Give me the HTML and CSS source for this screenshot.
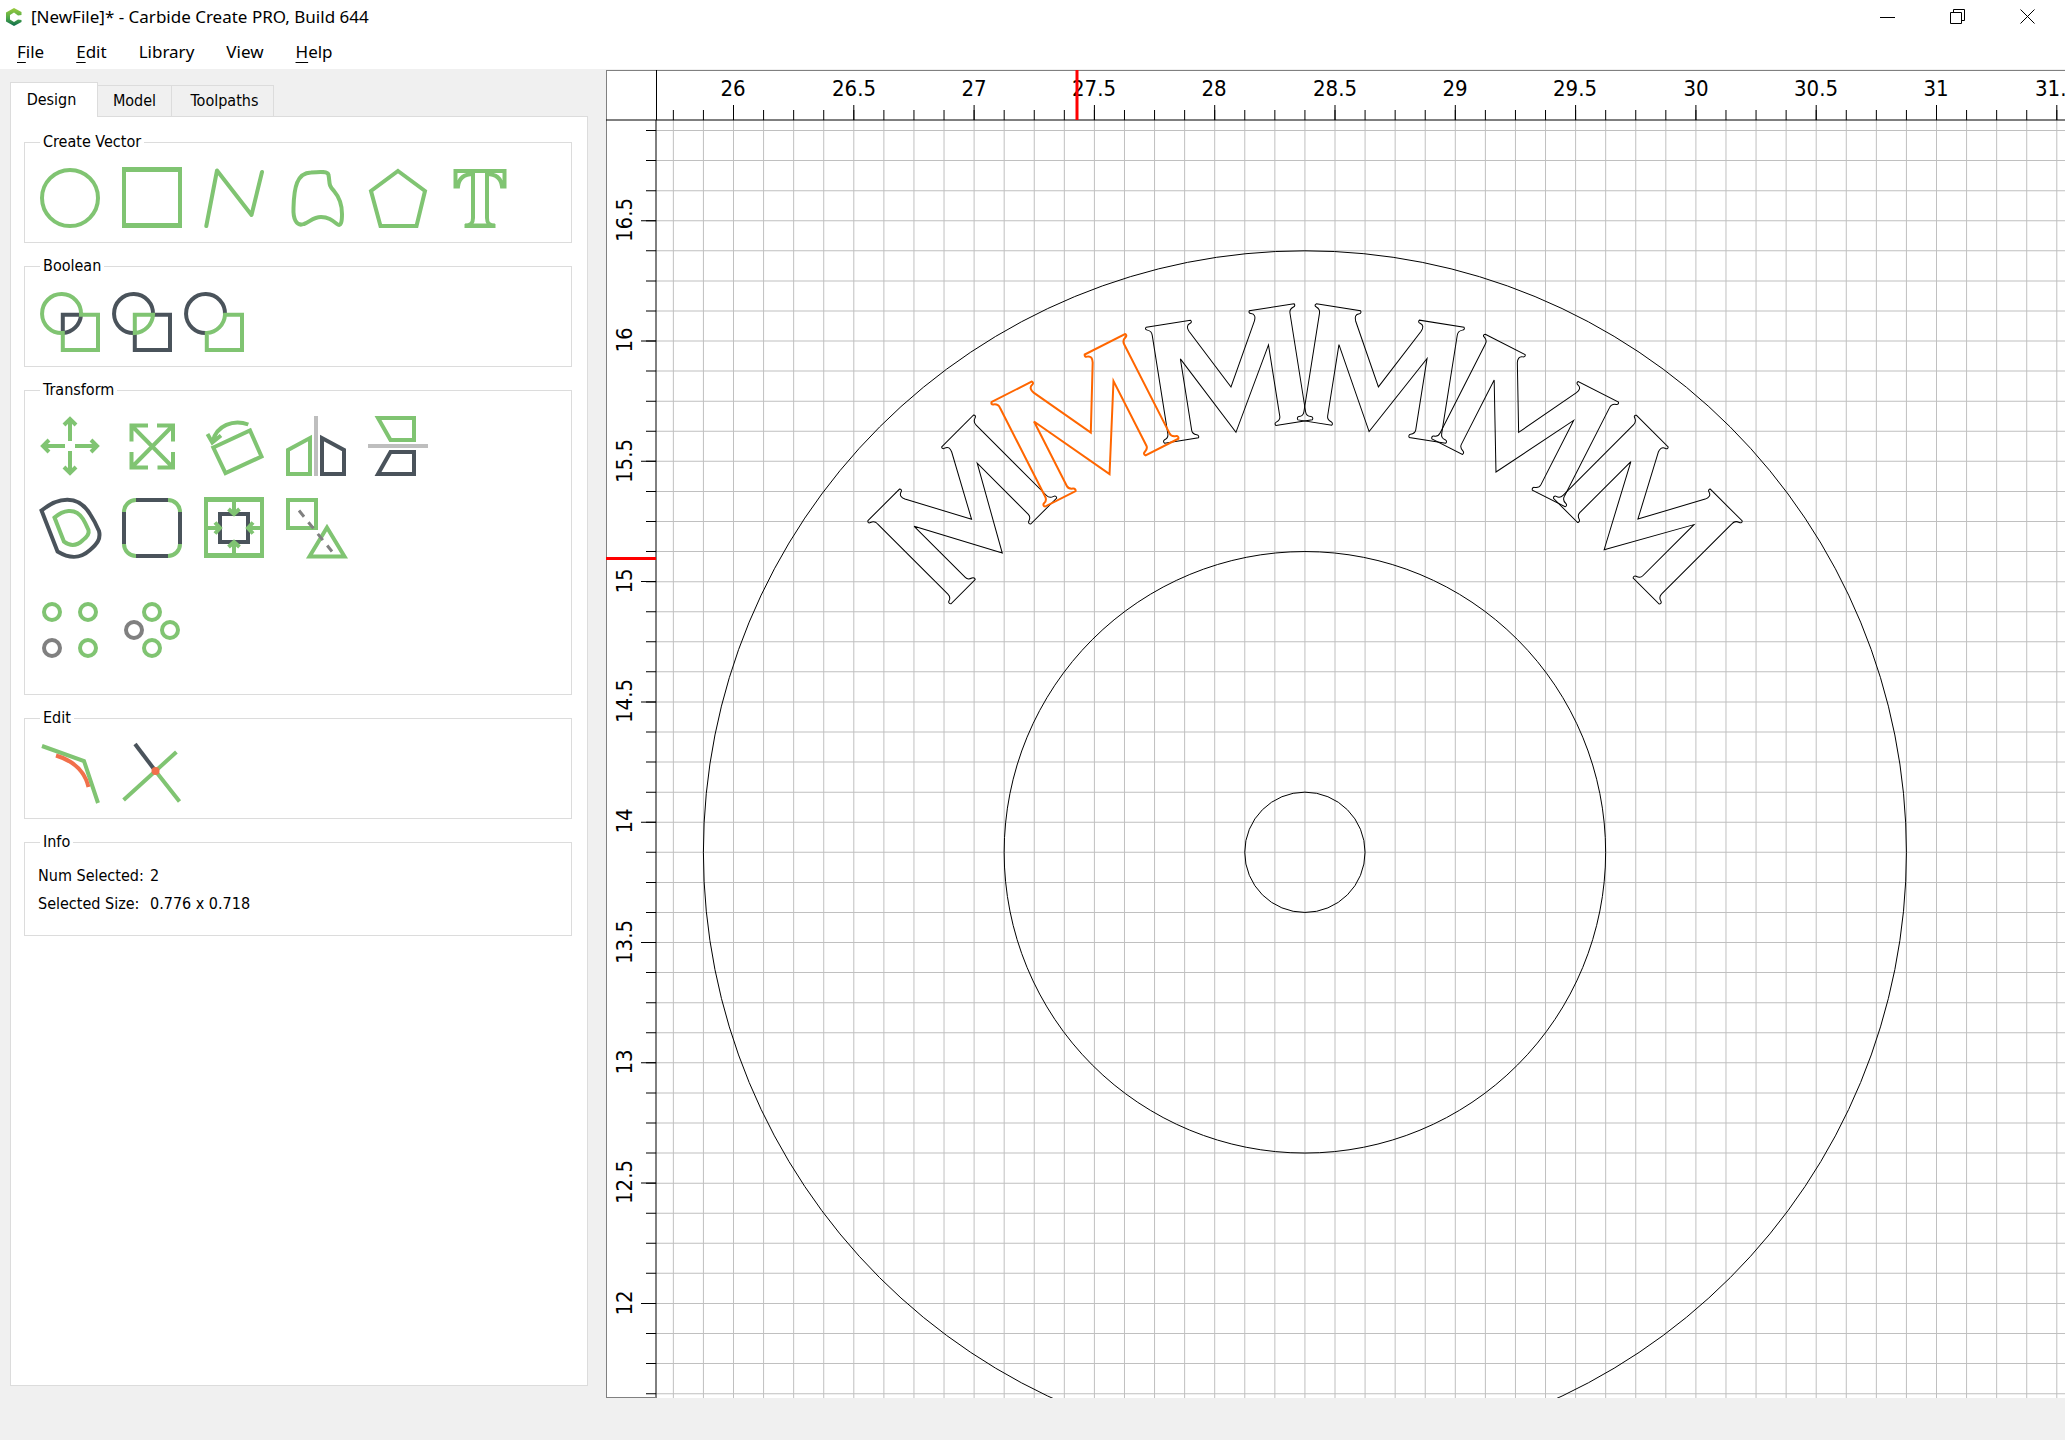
FILE: index.html
```html
<!DOCTYPE html>
<html lang="en">
<head>
<meta charset="utf-8">
<title>[NewFile]* - Carbide Create PRO, Build 644</title>
<link rel="stylesheet" href="styles.css">
</head>
<body>
<header class="titlebar">
  <svg class="logo" width="20" height="20" viewBox="0 0 20 20" aria-hidden="true">
    <defs><linearGradient id="logo-fill" x1="0" y1="0" x2="0" y2="1"><stop offset="0" stop-color="#9ccb3c"/><stop offset=".55" stop-color="#4fa84a"/><stop offset="1" stop-color="#0b6a4c"/></linearGradient></defs>
    <path fill="url(#logo-fill)" d="M10 1L17.500 5V8L14 8.500L10 5.500L6 8V12.500L10 15L14 12.500L17.500 13V15L10 19L2 14.500V5.500Z"/>
  </svg>
  <h1 class="title">[NewFile]* - Carbide Create PRO, Build 644</h1>
  <div class="window-controls">
    <button class="window-button" aria-label="Minimize"><svg width="16" height="16"><path d="M0 8.500H15"/></svg></button>
    <button class="window-button" aria-label="Restore"><svg width="16" height="16"><path d="M.5 3.500H11.500V14.500H.5ZM3.500 3.500V.5H14.500V11.500H11.500"/></svg></button>
    <button class="window-button" aria-label="Close"><svg width="16" height="16"><path d="M.5 .5L14.500 14.500M14.500 .5L.5 14.500"/></svg></button>
  </div>
</header>
<nav class="menubar">
  <button class="menu"><u>F</u>ile</button>
  <button class="menu"><u>E</u>dit</button>
  <button class="menu">Library</button>
  <button class="menu">View</button>
  <button class="menu"><u>H</u>elp</button>
</nav>
<main class="workspace">
  <aside class="sidebar">
    <div class="tabs" role="tablist">
      <button class="tab tab-active" role="tab" aria-selected="true">Design</button>
      <button class="tab" role="tab">Model</button>
      <button class="tab tab-wide" role="tab">Toolpaths</button>
    </div>
    <div class="pane">
      <fieldset class="group">
        <legend>Create Vector</legend>
        <div class="tools">
          <button class="tool" aria-label="Circle"><svg viewBox="0 0 60 60"><circle class="g" cx="30" cy="30" r="28"/></svg></button>
          <button class="tool" aria-label="Rectangle"><svg viewBox="0 0 60 60"><path class="gf" d="M0-1H60V60H0ZM4 4V55H56V4Z"/></svg></button>
          <button class="tool" aria-label="Polyline"><svg viewBox="0 0 60 60"><path class="g round" d="M2.300 58L13 2.500L47.500 47L58 4"/></svg></button>
          <button class="tool" aria-label="Curve"><svg viewBox="0 0 60 60"><path class="g" d="M7.500 40C8 19 11 5 25 4.500C35 3.500 42 3.500 42.500 7C44 14 42 17 48 23C54 30 56 38 56 46C56 54 55 59 51 56C46 52 42 49 35 49C27 49 24 54 18 56C10 59 7 50 7.500 40Z"/></svg></button>
          <button class="tool" aria-label="Polygon"><svg viewBox="0 0 60 60"><path class="g" d="M30 3L57 23L48.500 58H12.500L3 23Z"/></svg></button>
          <button class="tool" aria-label="Text"><svg viewBox="0 0 60 60"><path class="g" d="M5.500 18.500V3H54.500V18.500H52C51 10 46 6 37 6V50C37 55 39 57.500 45 57.500H15C21 57.500 23 55 23 50V6C14 6 9 10 8 18.500Z"/><path class="g" d="M14.500 58H45.500"/></svg></button>
        </div>
      </fieldset>
      <fieldset class="group">
        <legend>Boolean</legend>
        <div class="tools tools-tight">
          <button class="tool" aria-label="Union"><svg viewBox="0 0 60 60"><path class="d" d="M22.800 41V22.800H41A19.500 19.500 0 0 1 22.800 41"/><path class="g" d="M41 22.800A19.500 19.500 0 1 0 22.800 41V58H58V22.800Z"/></svg></button>
          <button class="tool" aria-label="Intersection"><svg viewBox="0 0 60 60"><path class="d" d="M41 22.800A19.500 19.500 0 1 0 22.800 41V58H58V22.800Z"/><path class="g" d="M22.800 41V22.800H41A19.500 19.500 0 0 1 22.800 41Z"/></svg></button>
          <button class="tool" aria-label="Subtract"><svg viewBox="0 0 60 60"><path class="d" d="M41 22.800A19.500 19.500 0 1 0 22.800 41"/><path class="g" d="M22.800 41V58H58V22.800H41A19.500 19.500 0 0 1 22.800 41Z"/></svg></button>
        </div>
      </fieldset>
      <fieldset class="group group-tall">
        <legend>Transform</legend>
        <div class="tools">
          <button class="tool" aria-label="Move"><svg viewBox="0 0 60 60"><path class="g" d="M30 3V25M24 9L30 3L36 9M30 57V35M24 51L30 57L36 51M3 30H25M9 24L3 30L9 36M57 30H35M51 24L57 30L51 36"/></svg></button>
          <button class="tool" aria-label="Scale"><svg viewBox="0 0 60 60"><path class="g" d="M26 9.500H9.500V25.500M35 9.500H51V25.500M9.500 36V51.500H26M35.500 51.500H51V36M9.500 9.500L51 51.500M51 9.500L9.500 51.500"/></svg></button>
          <button class="tool" aria-label="Rotate"><svg viewBox="0 0 60 60"><path class="g" d="M9.300 31.500L46 14.500L57.500 40.500L21.500 57ZM44.300 8.500C30 3 12 9 8.500 26M3.500 18L8.300 26.500L17 19.500"/></svg></button>
          <button class="tool" aria-label="Mirror horizontally"><svg viewBox="0 0 60 60"><path class="l" d="M30 0V60"/><path class="g" d="M2 34V58H24V22Z"/><path class="d" d="M58 34V58H36V22Z"/></svg></button>
          <button class="tool" aria-label="Mirror vertically"><svg viewBox="0 0 60 60"><path class="l" d="M0 30H60"/><path class="g" d="M10 2H46V24H22.500Z"/><path class="d" d="M10 58H46V36H22.500Z"/></svg></button>
        </div>
        <div class="tools">
          <button class="tool" aria-label="Offset"><svg viewBox="0 0 60 60"><path class="d" d="M1.500 12.500C18-1 38-4 50 16C54 22 56 26 59 33C61 41 57 46 50 52C40 61 30 61 17.500 53.500Z"/><path class="g" d="M14.500 19.500C22 13 35 8 43 21C46 26 47 29 48.500 32C49.500 36 47 39 43 42C37 48 31 49 24 43.700Z"/></svg></button>
          <button class="tool" aria-label="Fillet"><svg viewBox="0 0 60 60"><rect class="g" x="2" y="2" width="56" height="56" rx="12"/><path class="d" d="M14 2H46M14 58H46M2 14V46M58 14V46"/></svg></button>
          <button class="tool" aria-label="Fit"><svg viewBox="0 0 60 60"><path class="gf" d="M0-1H60V60H0ZM4 4V55H56V4Z"/><rect class="d" x="16" y="16" width="28" height="28"/><path class="g" d="M30 3V16M24.500 11L30 16L35.500 11M30 57V44M24.500 49L30 44L35.500 49M3 30H16M11 24.500L16 30L11 35.500M57 30H44M49 24.500L44 30L49 35.500"/></svg></button>
          <button class="tool" aria-label="Align"><svg viewBox="0 0 60 60"><path class="g" d="M2 2H30V30H2ZM41 29.500L23.500 58.500H58.500Z"/><path class="dash" d="M13 12.500L46 53.500"/></svg></button>
        </div>
        <div class="tools tools-array">
          <button class="tool" aria-label="Linear array"><svg viewBox="0 0 60 60"><circle class="g" cx="12" cy="12" r="8"/><circle class="g" cx="48" cy="12" r="8"/><circle class="n" cx="12" cy="48" r="8"/><circle class="g" cx="48" cy="48" r="8"/></svg></button>
          <button class="tool" aria-label="Circular array"><svg viewBox="0 0 60 60"><circle class="g" cx="30" cy="12" r="8"/><circle class="n" cx="12" cy="30" r="8"/><circle class="g" cx="48" cy="30" r="8"/><circle class="g" cx="30" cy="48" r="8"/></svg></button>
        </div>
      </fieldset>
      <fieldset class="group">
        <legend>Edit</legend>
        <div class="tools">
          <button class="tool" aria-label="Node edit"><svg viewBox="0 0 60 60"><path class="g" d="M2 2L44 17L58 59"/><path class="o" d="M16 11.500C34 17 45 28 48.500 43"/></svg></button>
          <button class="tool" aria-label="Trim"><svg viewBox="0 0 60 60"><path class="g" d="M1.600 56L54.400 8M33.500 27L57.500 57.500"/><path class="d" d="M13 0L33.500 27"/><circle class="of" cx="33.500" cy="27" r="4"/></svg></button>
        </div>
      </fieldset>
      <fieldset class="group group-info">
        <legend>Info</legend>
        <dl class="info">
          <dt>Num Selected:</dt><dd>2</dd>
          <dt>Selected Size:</dt><dd>0.776 x 0.718</dd>
        </dl>
      </fieldset>
    </div>
  </aside>
  <section class="viewport" aria-label="Drawing">
    <svg class="drawing" width="100%" height="100%">
      <defs>
        <path id="letter" d="M-74.500-543.500H-29.800C-28.800-542.500-28.800-541-30.500-540.500C-34.500-539.500-34.500-536-33-532.700L-.2-471.200L33.300-532.800C35-536.500 34.800-539.500 31-540.500C29-541 29-542.500 29.800-543.500H75C76-542.500 75.800-541 74-540.400C70.500-539.300 69.500-537.500 69.600-534.500V-435C69.500-432 71-430.200 74-429.400C76-428.800 76-427 75-426H38.200C37.200-427 37.200-428.800 39-429.400C42-430.400 43.400-431.800 43.400-434.500V-506.800L-2.400-425.600L-45.800-506.800V-434.500C-45.800-431.800-44.500-430.400-41.500-429.400C-39.700-428.800-39.500-427-40.300-426H-74.500C-75.700-427-75.700-428.800-74-429.400C-71-430.200-69.900-432-69.900-435V-534.500C-69.800-537.500-71-539.300-74-540.400C-76-541-76-542.500-74.500-543.500Z"/>
      </defs>
      <!-- grid and vectors, clipped to the area inside the rulers -->
      <svg x="50" y="50" width="100%" height="100%">
        <g transform="translate(-50 -50)">
          <path class="grid" stroke-width="4000" stroke-dasharray="1 29.075" d="M66.850 1000H5000"/>
          <path class="grid" stroke-width="8000" stroke-dasharray="1 29.075" d="M1000 60V4000"/>
          <g class="shape" transform="translate(698.900 782.300)">
            <circle r="601.500"/>
            <circle r="300.750"/>
            <circle r="60.150"/>
            <use href="#letter" transform="rotate(-45)"/>
            <use href="#letter" transform="rotate(-9)"/>
            <use href="#letter" transform="rotate(9)"/>
            <use href="#letter" transform="rotate(27)"/>
            <use href="#letter" transform="rotate(45)"/>
            <use class="selected" href="#letter" transform="rotate(-27)"/>
          </g>
        </g>
      </svg>
      <!-- rulers -->
      <path class="tick" stroke-width="10" stroke-dasharray="1 29.075" d="M66.850 45H5000"/>
      <path class="tick" stroke-width="15" stroke-dasharray="1 119.300" d="M127 42.500H5000"/>
      <path class="tick" stroke-width="10" stroke-dasharray="1 29.075" d="M45 60V4000"/>
      <path class="tick" stroke-width="15" stroke-dasharray="1 119.300" d="M42.500 150.200V4000"/>
      <path class="axis" d="M0 50H5000M50 50V4000M50.500 0V50"/>
      <g class="label">
        <text x="127" y="26">26</text><text x="248" y="26">26.5</text><text x="368" y="26">27</text><text x="488" y="26">27.5</text><text x="608" y="26">28</text><text x="729" y="26">28.5</text><text x="849" y="26">29</text><text x="969" y="26">29.5</text><text x="1090" y="26">30</text><text x="1210" y="26">30.5</text><text x="1330" y="26">31</text><text x="1451" y="26">31.5</text>
        <text transform="translate(26 150) rotate(-90)">16.5</text><text transform="translate(26 270) rotate(-90)">16</text><text transform="translate(26 391) rotate(-90)">15.5</text><text transform="translate(26 511) rotate(-90)">15</text><text transform="translate(26 631) rotate(-90)">14.5</text><text transform="translate(26 751) rotate(-90)">14</text><text transform="translate(26 872) rotate(-90)">13.5</text><text transform="translate(26 992) rotate(-90)">13</text><text transform="translate(26 1112) rotate(-90)">12.5</text><text transform="translate(26 1233) rotate(-90)">12</text>
      </g>
      <path class="cursor" d="M471 0V50M0 488.500H50"/>
    </svg>
    <div class="ruler-end"></div>
  </section>
</main>
<footer class="statusbar"></footer>
</body>
</html>
```
FILE: styles.css
```css
* { box-sizing: border-box; }

body {
  margin: 0;
  min-height: 100vh;
  display: flex;
  flex-direction: column;
  background: #f0f0f0;
  color: #000;
  font: 16px/20px "DejaVu Sans Condensed", "DejaVu Sans", sans-serif;
  overflow-x: hidden;
}

button {
  margin: 0;
  padding: 0;
  border: 0;
  background: none;
  color: inherit;
  font: inherit;
}

/* window frame */
.titlebar {
  display: flex;
  align-items: center;
  height: 34px;
  padding: 0 2px 0 4px;
  background: #fff;
}
.logo { margin-right: 7px; }
.title {
  flex: 1;
  margin: 0;
  font: 17px/24px "Noto Sans", sans-serif;
}
.window-controls { display: flex; align-self: stretch; }
.window-button {
  display: flex;
  align-items: center;
  justify-content: center;
  width: 70px;
}
.window-button svg { fill: none; stroke: #000; }

.menubar {
  display: flex;
  gap: 32px;
  height: 35px;
  padding: 0 17px;
  background: #fff;
  font: 17px/35px "Noto Sans", sans-serif;
}
.menu u { text-underline-offset: 4px; text-decoration-thickness: 1px; }

.workspace {
  flex: 1;
  display: flex;
  padding-top: 1px;
}
.statusbar { height: 42px; }

/* sidebar */
.sidebar {
  flex: none;
  display: flex;
  flex-direction: column;
  width: 606px;
  padding: 12px 18px 12px 10px;
}
.tabs {
  display: flex;
  align-items: flex-end;
  height: 34px;
}
.tab {
  width: 74px;
  height: 31px;
  border: 1px solid #dcdcdc;
  border-left: 0;
  border-bottom: 0;
}
.tab-wide { width: 102px; padding-left: 4px; }
.tab-active {
  position: relative;
  width: 88px;
  height: 35px;
  margin-bottom: -1px;
  padding: 0 5px 1px 0;
  border-left: 1px solid #dcdcdc;
  background: #fff;
}
.pane {
  flex: 1;
  display: flex;
  flex-direction: column;
  gap: 13px;
  padding: 15px 15px 15px 13px;
  border: 1px solid #dcdcdc;
  background: #fff;
}
.group {
  margin: 0;
  padding: 16px 15px 14px;
  border: 1px solid #dcdcdc;
}
.group-tall { padding-bottom: 34px; }
.group-info { padding: 14px 13px 21px; }
.group legend { padding: 0 3px; line-height: 20px; }
.group-info legend { margin-left: 2px; }

.tools { display: flex; gap: 22px; }
.tools + .tools { margin-top: 22px; }
.tools + .tools-array { margin-top: 42px; }
.tools-tight { gap: 12px; }
.tool { width: 60px; height: 60px; }
.tool svg {
  display: block;
  width: 60px;
  height: 60px;
  overflow: visible;
  fill: none;
  stroke-width: 4;
}
.g { stroke: #80c472; }
.d { stroke: #4a535b; }
.l { stroke: #bebebe; }
.n { stroke: #808080; }
.o { stroke: #f1704b; }
.of { fill: #f1704b; }
.gf { fill: #80c472; fill-rule: evenodd; }
.round { stroke-linecap: round; stroke-linejoin: round; }
.dash { stroke: #808080; stroke-width: 3; stroke-dasharray: 8 7; }

.info {
  display: grid;
  grid-template-columns: 112px 1fr;
  row-gap: 8px;
  margin: 0;
}
.info dd { margin: 0; }

/* drawing area */
.viewport {
  flex: 1;
  display: grid;
  grid-template-rows: 1fr 1px;
  min-width: 0;
  border: 1px solid #808080;
  border-width: 1px 0 0 1px;
  background: #fff;
}
.drawing {
  display: block;
  grid-area: 1 / 1 / 3 / 2;
  width: calc(100% + 1px);
  margin: -1px 0 0 -1px;
  min-height: 1328px;
}
.ruler-end {
  grid-area: 2 / 1;
  width: 50px;
  background: #808080;
}
.grid { fill: none; stroke: #c0c0c0; }
.tick { fill: none; stroke: #000; }
.axis { fill: none; stroke: #000; }
.shape { fill: none; stroke: #000; }
.selected { stroke: #f60; stroke-width: 2; }
.cursor { fill: none; stroke: #f00; stroke-width: 3; }
.label {
  font-size: 22px;
  text-anchor: middle;
}
```
